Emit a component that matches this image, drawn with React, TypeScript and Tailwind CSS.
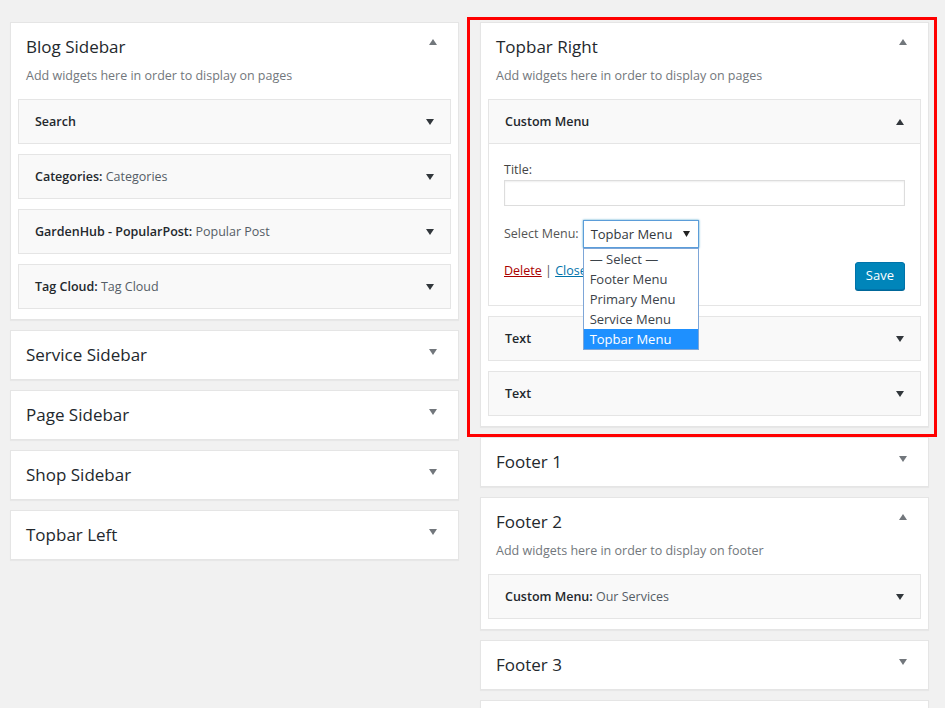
import React from "react";

type Widget = { name: string; title?: string };

const font = { fontFamily: '"Open Sans", "Liberation Sans", sans-serif' };

const Arrow = ({ up, className }: { up?: boolean; className?: string }) => (
  <svg width="8" height="6" viewBox="0 0 8 6" className={className}>
    <path d={up ? "M0 6L4 0L8 6Z" : "M0 0L8 0L4 6Z"} fill="currentColor" />
  </svg>
);

const WidgetRow = ({ widget }: { widget: Widget }) => (
  <div className="flex h-[45px] items-center justify-between border border-[#e5e5e5] bg-[#f9f9f9] px-4">
    <p className="pt-[1px] text-[12.5px] leading-[18px] font-semibold text-[#23282d]">
      {widget.name}
      {widget.title && (
        <>
          :{" "}
          <span className="font-normal text-[#555d66]">{widget.title}</span>
        </>
      )}
    </p>
    <Arrow className="text-[#32373c]" />
  </div>
);

const SidebarCard = ({
  name,
  description,
  widgets,
  children,
}: {
  name?: string;
  description?: string;
  widgets?: Widget[];
  children?: React.ReactNode;
}) => {
  const open = !!description;
  return (
    <div className="border border-[#e5e5e5] bg-white shadow-[0_1px_1px_rgba(0,0,0,0.04)]">
      <div
        className={
          open
            ? "flex items-start justify-between pt-[13px] pr-[21px] pl-[15px]"
            : "flex items-start justify-between pt-[13px] pr-[21px] pb-[13px] pl-[15px]"
        }
      >
        <h2 className="h-[22px] text-[17px] leading-[22px] font-normal text-[#23282d]">
          {name}
        </h2>
        <Arrow
          up={open}
          className={open ? "mt-[3px] text-[#72777c]" : "mt-[5px] text-[#72777c]"}
        />
      </div>
      {open && (
        <>
          <p className="mt-[9px] px-[15px] text-[12.5px] leading-[18px] text-[#72777c]">
            {description}
          </p>
          <div className="mt-[14px] flex flex-col gap-[10px] px-[7px] pb-[10px]">
            {children}
            {widgets?.map((w, i) => (
              <WidgetRow key={i} widget={w} />
            ))}
          </div>
        </>
      )}
    </div>
  );
};

const menuOptions = [
  "— Select —",
  "Footer Menu",
  "Primary Menu",
  "Service Menu",
  "Topbar Menu",
];

const CustomMenuWidget = () => (
  <div className="border border-[#e5e5e5] bg-white">
    <div className="flex h-[44px] items-center justify-between border-b border-[#e5e5e5] bg-[#f9f9f9] px-4">
      <p className="pt-[1px] text-[12.5px] leading-[18px] font-semibold text-[#23282d]">
        Custom Menu
      </p>
      <Arrow up className="text-[#32373c]" />
    </div>
    <div className="px-[15px] pt-[16px] pb-[15px]">
      <label className="block text-[12.5px] leading-[20px] text-[#444]">
        Title:
      </label>
      <div className="h-[26px] w-full border border-[#ddd] bg-white shadow-[inset_0_1px_2px_rgba(0,0,0,0.07)]" />
      <div className="mt-[14px] flex items-center gap-[4px]">
        <span className="text-[12.5px] leading-[18px] text-[#555]">
          Select Menu:
        </span>
        <div className="relative">
          <div className="flex h-[28px] w-[116px] items-center justify-between border border-[#5b9dd9] bg-white pr-[8px] pl-[7px] shadow-[0_0_2px_rgba(30,140,190,0.8)]">
            <span className="text-[13px] leading-[18px] text-[#32373c]">
              Topbar Menu
            </span>
            <svg width="7" height="6" viewBox="0 0 7 6">
              <path d="M0 0L7 0L3.5 6Z" fill="#222" />
            </svg>
          </div>
          <ul className="absolute top-[28px] left-0 z-10 w-[116px] border border-[#7ea6d8] bg-white">
            {menuOptions.map((o, i) => (
              <li
                key={i}
                className={
                  i === menuOptions.length - 1
                    ? "h-[20px] bg-[#1e90ff] pl-[6px] text-[13px] leading-[20px] text-white"
                    : "h-[20px] pl-[6px] text-[13px] leading-[20px] text-[#3c434a]"
                }
              >
                {o}
              </li>
            ))}
          </ul>
        </div>
      </div>
      <div className="mt-[14px] flex items-start justify-between">
        <p className="text-[12.5px] leading-[18px] text-[#555]">
          <a className="text-[#a00] underline">Delete</a> |{" "}
          <a className="text-[#0073aa] underline">Close</a>
        </p>
        <button className="h-[28px] rounded-[3px] border border-[#0073aa] bg-[#0085ba] px-[10px] text-[13px] text-white shadow-[0_1px_0_#006799]">
          Save
        </button>
      </div>
    </div>
  </div>
);

export default function App() {
  return (
    <div
      className="h-[708px] overflow-hidden bg-[#f1f1f1] pl-[10px]"
      style={font}
    >
      <div className="flex gap-[21px] pt-[22px]">
        {/* ------------------------- left column ------------------------- */}
        <div className="flex w-[449px] flex-col gap-[10px]">
          <SidebarCard
            name="Blog Sidebar"
            description="Add widgets here in order to display on pages"
            widgets={[
              { name: "Search" },
              { name: "Categories", title: "Categories" },
              { name: "GardenHub - PopularPost", title: "Popular Post" },
              { name: "Tag Cloud", title: "Tag Cloud" },
            ]}
          />
          <SidebarCard name="Service Sidebar" />
          <SidebarCard name="Page Sidebar" />
          <SidebarCard name="Shop Sidebar" />
          <SidebarCard name="Topbar Left" />
        </div>

        {/* ------------------------- right column ------------------------ */}
        <div className="flex w-[449px] flex-col gap-[10px]">
          <div className="relative">
            <SidebarCard
              name="Topbar Right"
              description="Add widgets here in order to display on pages"
              widgets={[{ name: "Text" }, { name: "Text" }]}
            >
              <CustomMenuWidget />
            </SidebarCard>
            <div className="pointer-events-none absolute -top-[5px] -right-[8px] -bottom-[10px] -left-[13px] border-[3px] border-[#f00]" />
          </div>
          <SidebarCard name="Footer 1" />
          <SidebarCard
            name="Footer 2"
            description="Add widgets here in order to display on footer"
            widgets={[{ name: "Custom Menu", title: "Our Services" }]}
          />
          <SidebarCard name="Footer 3" />
          <SidebarCard />
        </div>
      </div>
    </div>
  );
}
